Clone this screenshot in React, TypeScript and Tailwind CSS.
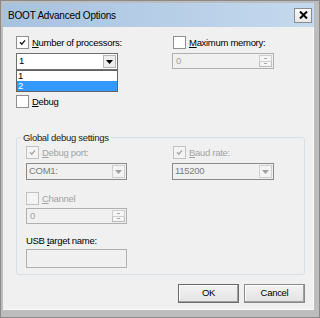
import type { ReactNode } from "react";

const font = { fontFamily: '"Liberation Sans", Arial, sans-serif' };

function Check({ checked, disabled }: { checked?: boolean; disabled?: boolean }) {
  return (
    <span
      className={`flex h-[13px] w-[13px] shrink-0 items-center justify-center border ${
        disabled ? "border-[#c2c2c2] bg-[#f4f4f4]" : "border-[#8e8f8f] bg-white"
      }`}
    >
      {checked && (
        <svg width="9" height="9" viewBox="0 0 9 9">
          <polyline
            points="2,4.3 3.8,6.2 7,2.4"
            fill="none"
            stroke={disabled ? "#a6a6a6" : "#1a1a1a"}
            strokeWidth="1.4"
          />
        </svg>
      )}
    </span>
  );
}

function CheckRow({
  checked,
  disabled,
  children,
}: {
  checked?: boolean;
  disabled?: boolean;
  children: ReactNode;
}) {
  return (
    <div className="flex h-[13px] items-center gap-[3px]">
      <Check checked={checked} disabled={disabled} />
      <span
        className={`text-[9.5px] leading-[13px] tracking-[-0.3px] ${
          disabled ? "text-[#a3a3a3]" : "text-black"
        }`}
      >
        {children}
      </span>
    </div>
  );
}

function Arrow({ color }: { color: string }) {
  return (
    <svg width="7" height="4" viewBox="0 0 7 4">
      <polygon points="0,0 7,0 3.5,4" fill={color} />
    </svg>
  );
}

function Combo({
  value,
  disabled,
  w,
}: {
  value: string;
  disabled?: boolean;
  w: string;
}) {
  return (
    <div
      className={`flex h-[17px] ${w} items-center justify-between border pl-[2px] pr-[1px] ${
        disabled ? "border-[#8a8a8a] bg-[#f0f0f0]" : "border-[#6e6e6e] bg-white"
      }`}
    >
      <span
        className={`text-[9.5px] tracking-[-0.3px] ${
          disabled ? "text-[#7c7c7c]" : "text-black"
        }`}
      >
        {value}
      </span>
      <span
        className={`flex h-[13px] w-[13px] items-center justify-center border ${
          disabled ? "border-[#cfcfcf] bg-[#f3f3f3]" : "border-[#b4b4b4] bg-[#ededed]"
        }`}
      >
        <Arrow color={disabled ? "#a0a0a0" : "#000"} />
      </span>
    </div>
  );
}

function Spinner({ w }: { w: string }) {
  return (
    <div
      className={`flex h-[16px] ${w} items-center justify-between border border-[#b0b0b0] bg-[#f0f0f0] pl-[3px] pr-[1px]`}
    >
      <span className="text-[9.5px] text-[#a0a0a0]">0</span>
      <span className="flex h-[12px] w-[13px] flex-col">
        <span className="flex flex-1 items-center justify-center border border-[#cfcfcf] bg-[#f5f5f5]">
          <span className="h-px w-[3px] bg-[#a8a8a8]" />
        </span>
        <span className="flex flex-1 items-center justify-center border border-t-0 border-[#bcbcbc] bg-[#f5f5f5]">
          <span className="h-px w-[3px] bg-[#a8a8a8]" />
        </span>
      </span>
    </div>
  );
}

function Button({ children, isDefault }: { children: ReactNode; isDefault?: boolean }) {
  return (
    <button
      className={`flex h-[19px] w-[61px] items-center justify-center border bg-gradient-to-b from-[#f2f2f2] to-[#e4e4e4] text-[9.5px] tracking-[-0.3px] text-black shadow-[inset_-1px_-1px_0_#a0a0a0,inset_1px_1px_0_#ffffff] ${
        isDefault ? "border-[#6a6a6a]" : "border-[#8a8a8a]"
      }`}
    >
      {children}
    </button>
  );
}

export default function App() {
  return (
    <div
      style={font}
      className="flex h-[318px] w-[320px] flex-col border border-[#8a8a8a] bg-[#bdbdbd] pb-[7px] pl-[2px] pr-[5px] pt-[2px]"
    >
      {/* Title bar */}
      <div className="flex h-[24px] shrink-0 items-center justify-between bg-gradient-to-r from-[#a7c2df] to-[#c5d9ee] pl-[5px] pr-[2px]">
        <span className="text-[10px] tracking-[-0.2px] text-black">BOOT Advanced Options</span>
        <span className="flex h-[15px] w-[18px] items-center justify-center border border-[#8c8c8c] bg-gradient-to-b from-[#fbfbfb] to-[#e6e6e6]">
          <svg width="9" height="8" viewBox="0 0 9 8">
            <path d="M1 0.5 L8 7.5 M8 0.5 L1 7.5" stroke="#000" strokeWidth="2" />
          </svg>
        </span>
      </div>

      {/* Body */}
      <div className="flex flex-1 flex-col border-b border-r border-[#fafafa] bg-[#f0f0f0] pl-[13px] pt-[9px]">
        <div className="flex">
          <div className="flex w-[156px] flex-col">
            <CheckRow checked>
              <span className="underline underline-offset-1">N</span>umber of processors:
            </CheckRow>
            <div className="relative mt-[4px]">
              <Combo value="1" w="w-[102px]" />
              <div className="absolute left-0 top-full flex w-[102px] flex-col border border-[#646464] bg-white text-[9.5px] leading-[10px]">
                <span className="h-[10px] pl-[1px] text-black">1</span>
                <span className="h-[10px] bg-[#3399ff] pl-[1px] text-white">2</span>
              </div>
            </div>
            <div className="mt-[25px]">
              <CheckRow>
                <span className="underline underline-offset-1">D</span>ebug
              </CheckRow>
            </div>
          </div>
          <div className="flex flex-col">
            <div className="ml-[1px]">
              <CheckRow>
                <span className="underline underline-offset-1">M</span>aximum memory:
              </CheckRow>
            </div>
            <div className="mt-[4px]">
              <Spinner w="w-[102px]" />
            </div>
          </div>
        </div>

        {/* Global debug settings */}
        <div className="relative mt-[29px] w-[289px] rounded-[3px] border border-[#d5dfe5] pb-[6px] pl-[9px] pt-[8px]">
          <span className="absolute -top-[7px] left-[4px] bg-[#f0f0f0] px-[2px] text-[9.5px] leading-[13px] tracking-[-0.3px] text-[#1a1a1a]">
            Global debug settings
          </span>
          <div className="flex">
            <div className="flex w-[146px] flex-col">
              <CheckRow checked disabled>
                <span className="underline underline-offset-1">D</span>ebug port:
              </CheckRow>
              <div className="mt-[4px]">
                <Combo value="COM1:" disabled w="w-[101px]" />
              </div>
              <div className="mt-[12px]">
                <CheckRow disabled>
                  <span className="underline underline-offset-1">C</span>hannel
                </CheckRow>
              </div>
              <div className="mt-[3px]">
                <Spinner w="w-[101px]" />
              </div>
              <span className="mt-[10px] text-[9.5px] leading-[13px] tracking-[-0.3px] text-black">
                USB <span className="underline underline-offset-1">t</span>arget name:
              </span>
              <div className="mt-[2px] h-[19px] w-[101px] border border-[#b0b0b0] bg-[#f0f0f0]" />
            </div>
            <div className="flex flex-col">
              <div className="ml-[1px]">
                <CheckRow checked disabled>
                  <span className="underline underline-offset-1">B</span>aud rate:
                </CheckRow>
              </div>
              <div className="mt-[4px]">
                <Combo value="115200" disabled w="w-[102px]" />
              </div>
            </div>
          </div>
        </div>

        {/* Buttons */}
        <div className="mt-[9px] flex w-[289px] justify-end gap-[5px]">
          <Button isDefault>OK</Button>
          <Button>Cancel</Button>
        </div>
      </div>
    </div>
  );
}
